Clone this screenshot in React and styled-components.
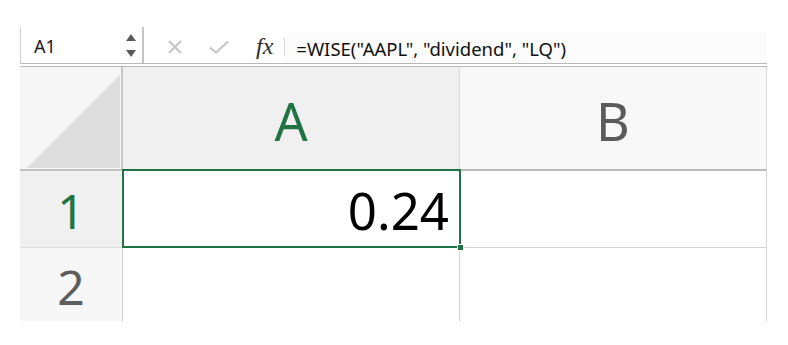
import React from "react";
import styled, { createGlobalStyle } from "styled-components";

const GlobalStyle = createGlobalStyle`
  html, body {
    margin: 0;
    padding: 0;
    background: #fff;
  }
  body {
    font-family: "Noto Sans", "Open Sans", sans-serif;
  }
  * {
    box-sizing: border-box;
  }
`;

const GREEN = "#217346";

// styled-components
const Page = styled.div`
  width: 788px;
  height: 345px;
  padding: 27px 21px 0 20px;
`;

const FormulaBar = styled.div`
  height: 40px;
  display: flex;
  align-items: center;
  border-bottom: 4px double #b8b8b8;
`;

const NameBox = styled.div`
  align-self: stretch;
  width: 124px;
  display: flex;
  align-items: center;
  justify-content: space-between;
  padding: 2px 6px 0 13px;
  border-left: 1px solid #cfcfcf;
  border-right: 2px solid #c4c4c4;
  font-size: 18px;
  color: #1a1a1a;
`;

const Spinner = styled.div`
  display: flex;
  flex-direction: column;
  gap: 9px;
  margin-top: -2px;
`;

const Arrow = styled.span`
  width: 0;
  height: 0;
  border-left: 5px solid transparent;
  border-right: 5px solid transparent;
  border-${(props) => (props.$down ? "top" : "bottom")}: 7px solid #5a5a5a;
`;

const Tools = styled.div`
  display: flex;
  align-items: center;
  padding: 4px 0 0 23px;
  gap: 26px;
`;

const ToolIcon = styled.svg`
  display: block;
  stroke: #c6c6c6;
  fill: none;
  stroke-width: 2.2;
`;

const Fx = styled.span`
  font-family: "Liberation Serif", "DejaVu Serif", serif;
  font-style: italic;
  font-size: 24px;
  line-height: 1;
  color: #2b2b2b;
  margin-left: 27px;
  padding-top: 2px;
`;

const Divider = styled.span`
  width: 1px;
  height: 18px;
  background: #dcdcdc;
  margin-left: 11px;
  margin-top: 4px;
`;

const Formula = styled.div`
  align-self: stretch;
  flex: 1;
  display: flex;
  align-items: center;
  padding-left: 11px;
  padding-top: 1px;
  margin-top: 5px;
  background: #fcfcfc;
  font-size: 18.5px;
  color: #111;
  white-space: nowrap;
`;

const Sheet = styled.div`
  display: grid;
  grid-template-columns: 103px 337px 307px;
  grid-template-rows: 104px 77px 73px;
`;

const Corner = styled.div`
  background: #f6f6f6;
  border-right: 2px solid #c9c9c9;
  border-bottom: 2px solid #c2c2c2;
  padding: 8px 1px 1px 7px;
`;

const Triangle = styled.div`
  width: 100%;
  height: 100%;
  background: #dddddd;
  clip-path: polygon(100% 0, 100% 100%, 0 100%);
`;

const ColHeader = styled.div`
  display: flex;
  align-items: center;
  justify-content: center;
  padding-top: 6px;
  background: ${(props) => (props.$selected ? "#f0f0f0" : "#f8f8f8")};
  color: ${(props) => (props.$selected ? GREEN : "#5b5b5b")};
  border-right: 1px solid #d8d8d8;
  border-bottom: 2px solid #bdbdbd;
  font-size: 52px;
  line-height: 1;
`;

const RowHeader = styled.div`
  display: flex;
  align-items: center;
  justify-content: center;
  padding-top: 4px;
  background: ${(props) => (props.$selected ? "#f0f0f0" : "#f7f7f7")};
  color: ${(props) => (props.$selected ? GREEN : "#5e5e5e")};
  border-right: 1px solid #cfcfcf;
  border-bottom: ${(props) => (props.$last ? "none" : "1px solid #dcdcdc")};
  font-size: 48px;
  line-height: 1;
`;

const Cell = styled.div`
  position: relative;
  display: flex;
  align-items: center;
  justify-content: flex-end;
  padding: 2px 10px 0 0;
  background: #fff;
  border-right: 1px solid #d4d4d4;
  border-bottom: ${(props) => (props.$last ? "none" : "1px solid #d4d4d4")};
  font-size: 51px;
  line-height: 1;
  color: #000;
`;

const Selection = styled.div`
  position: absolute;
  z-index: 2;
  top: -2px;
  left: -1px;
  right: -2px;
  bottom: -1px;
  border: 2px solid ${GREEN};
  pointer-events: none;
`;

const Handle = styled.span`
  position: absolute;
  right: -5px;
  bottom: -5px;
  width: 7px;
  height: 7px;
  background: ${GREEN};
  border: 1px solid #fff;
`;

function App() {
  return (
    <Page>
      <GlobalStyle />
      <FormulaBar>
        <NameBox>
          <span>A1</span>
          <Spinner>
            <Arrow />
            <Arrow $down />
          </Spinner>
        </NameBox>
        <Tools>
          <ToolIcon width="16" height="16" viewBox="0 0 16 16">
            <path d="M2 2 14 14M14 2 2 14" />
          </ToolIcon>
          <ToolIcon width="20" height="14" viewBox="0 0 20 14">
            <path d="M1 7.5 7 12.5 19 1.5" />
          </ToolIcon>
        </Tools>
        <Fx>fx</Fx>
        <Divider />
        <Formula>=WISE("AAPL", "dividend", "LQ")</Formula>
      </FormulaBar>
      <Sheet>
        <Corner>
          <Triangle />
        </Corner>
        <ColHeader $selected>A</ColHeader>
        <ColHeader>B</ColHeader>

        <RowHeader $selected>1</RowHeader>
        <Cell>
          0.24
          <Selection>
            <Handle />
          </Selection>
        </Cell>
        <Cell />

        <RowHeader $last>2</RowHeader>
        <Cell $last />
        <Cell $last />
      </Sheet>
    </Page>
  );
}

export default App;
